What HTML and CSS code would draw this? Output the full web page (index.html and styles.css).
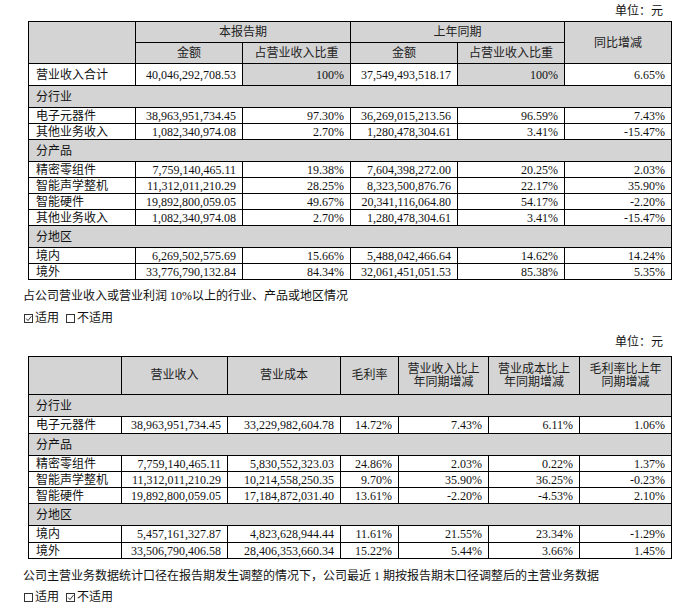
FILE: index.html
```html
<!DOCTYPE html>
<html lang="zh-CN">
<head>
<meta charset="utf-8">
<title>主营业务</title>
<link rel="stylesheet" href="styles.css">
</head>
<body>
<div class="page">
  <div class="unit unit-first">单位：元</div>
  <table class="grid t1">
    <colgroup>
      <col class="w107"><col class="w107"><col class="w108"><col class="w107"><col class="w107"><col class="w107">
    </colgroup>
    <thead>
      <tr class="hr">
        <th rowspan="2" class="g"></th>
        <th colspan="2" class="g">本报告期</th>
        <th colspan="2" class="g">上年同期</th>
        <th rowspan="2" class="g">同比增减</th>
      </tr>
      <tr class="hr">
        <th class="g">金额</th>
        <th class="g">占营业收入比重</th>
        <th class="g">金额</th>
        <th class="g">占营业收入比重</th>
      </tr>
    </thead>
    <tbody>
      <tr class="total">
        <td class="lbl">营业收入合计</td>
        <td class="num">40,046,292,708.53</td>
        <td class="num g">100%</td>
        <td class="num">37,549,493,518.17</td>
        <td class="num g">100%</td>
        <td class="num">6.65%</td>
      </tr>
      <tr class="sec"><td colspan="6" class="g lbl">分行业</td></tr>
      <tr class="row">
        <td class="lbl">电子元器件</td>
        <td class="num">38,963,951,734.45</td>
        <td class="num">97.30%</td>
        <td class="num">36,269,015,213.56</td>
        <td class="num">96.59%</td>
        <td class="num">7.43%</td>
      </tr>
      <tr class="row">
        <td class="lbl">其他业务收入</td>
        <td class="num">1,082,340,974.08</td>
        <td class="num">2.70%</td>
        <td class="num">1,280,478,304.61</td>
        <td class="num">3.41%</td>
        <td class="num">-15.47%</td>
      </tr>
      <tr class="sec"><td colspan="6" class="g lbl">分产品</td></tr>
      <tr class="row">
        <td class="lbl">精密零组件</td>
        <td class="num">7,759,140,465.11</td>
        <td class="num">19.38%</td>
        <td class="num">7,604,398,272.00</td>
        <td class="num">20.25%</td>
        <td class="num">2.03%</td>
      </tr>
      <tr class="row">
        <td class="lbl">智能声学整机</td>
        <td class="num">11,312,011,210.29</td>
        <td class="num">28.25%</td>
        <td class="num">8,323,500,876.76</td>
        <td class="num">22.17%</td>
        <td class="num">35.90%</td>
      </tr>
      <tr class="row">
        <td class="lbl">智能硬件</td>
        <td class="num">19,892,800,059.05</td>
        <td class="num">49.67%</td>
        <td class="num">20,341,116,064.80</td>
        <td class="num">54.17%</td>
        <td class="num">-2.20%</td>
      </tr>
      <tr class="row">
        <td class="lbl">其他业务收入</td>
        <td class="num">1,082,340,974.08</td>
        <td class="num">2.70%</td>
        <td class="num">1,280,478,304.61</td>
        <td class="num">3.41%</td>
        <td class="num">-15.47%</td>
      </tr>
      <tr class="sec"><td colspan="6" class="g lbl">分地区</td></tr>
      <tr class="row">
        <td class="lbl">境内</td>
        <td class="num">6,269,502,575.69</td>
        <td class="num">15.66%</td>
        <td class="num">5,488,042,466.64</td>
        <td class="num">14.62%</td>
        <td class="num">14.24%</td>
      </tr>
      <tr class="row">
        <td class="lbl">境外</td>
        <td class="num">33,776,790,132.84</td>
        <td class="num">84.34%</td>
        <td class="num">32,061,451,051.53</td>
        <td class="num">85.38%</td>
        <td class="num">5.35%</td>
      </tr>
    </tbody>
  </table>

  <p class="note note-1">占公司营业收入或营业利润 10%以上的行业、产品或地区情况</p>
  <p class="opts opts-1"><svg class="box" viewBox="0 0 11 11" width="11" height="11"><rect x="1.5" y="1.5" width="8" height="8" fill="none" stroke="#333" stroke-width="1"/><path d="M3.2 5.6 L5 7.6 L8.4 3.2" fill="none" stroke="#333" stroke-width="1"/></svg>适用<span class="sp"></span><svg class="box" viewBox="0 0 11 11" width="11" height="11"><rect x="1.5" y="1.5" width="8" height="8" fill="none" stroke="#333" stroke-width="1"/></svg>不适用</p>

  <div class="unit unit-second">单位：元</div>
  <table class="grid t2">
    <colgroup>
      <col class="w93"><col class="w106"><col class="w113"><col class="w58"><col class="w90"><col class="w91"><col class="w92">
    </colgroup>
    <thead>
      <tr class="hr2">
        <th class="g"></th>
        <th class="g">营业收入</th>
        <th class="g">营业成本</th>
        <th class="g">毛利率</th>
        <th class="g">营业收入比上<br>年同期增减</th>
        <th class="g">营业成本比上<br>年同期增减</th>
        <th class="g">毛利率比上年<br>同期增减</th>
      </tr>
    </thead>
    <tbody>
      <tr class="sec"><td colspan="7" class="g lbl">分行业</td></tr>
      <tr class="row row17">
        <td class="lbl">电子元器件</td>
        <td class="num">38,963,951,734.45</td>
        <td class="num">33,229,982,604.78</td>
        <td class="num">14.72%</td>
        <td class="num">7.43%</td>
        <td class="num">6.11%</td>
        <td class="num">1.06%</td>
      </tr>
      <tr class="sec"><td colspan="7" class="g lbl">分产品</td></tr>
      <tr class="row">
        <td class="lbl">精密零组件</td>
        <td class="num">7,759,140,465.11</td>
        <td class="num">5,830,552,323.03</td>
        <td class="num">24.86%</td>
        <td class="num">2.03%</td>
        <td class="num">0.22%</td>
        <td class="num">1.37%</td>
      </tr>
      <tr class="row">
        <td class="lbl">智能声学整机</td>
        <td class="num">11,312,011,210.29</td>
        <td class="num">10,214,558,250.35</td>
        <td class="num">9.70%</td>
        <td class="num">35.90%</td>
        <td class="num">36.25%</td>
        <td class="num">-0.23%</td>
      </tr>
      <tr class="row">
        <td class="lbl">智能硬件</td>
        <td class="num">19,892,800,059.05</td>
        <td class="num">17,184,872,031.40</td>
        <td class="num">13.61%</td>
        <td class="num">-2.20%</td>
        <td class="num">-4.53%</td>
        <td class="num">2.10%</td>
      </tr>
      <tr class="sec"><td colspan="7" class="g lbl">分地区</td></tr>
      <tr class="row row17">
        <td class="lbl">境内</td>
        <td class="num">5,457,161,327.87</td>
        <td class="num">4,823,628,944.44</td>
        <td class="num">11.61%</td>
        <td class="num">21.55%</td>
        <td class="num">23.34%</td>
        <td class="num">-1.29%</td>
      </tr>
      <tr class="row">
        <td class="lbl">境外</td>
        <td class="num">33,506,790,406.58</td>
        <td class="num">28,406,353,660.34</td>
        <td class="num">15.22%</td>
        <td class="num">5.44%</td>
        <td class="num">3.66%</td>
        <td class="num">1.45%</td>
      </tr>
    </tbody>
  </table>

  <p class="note note-2">公司主营业务数据统计口径在报告期发生调整的情况下，公司最近 1 期按报告期末口径调整后的主营业务数据</p>
  <p class="opts opts-2"><svg class="box" viewBox="0 0 11 11" width="11" height="11"><rect x="1.5" y="1.5" width="8" height="8" fill="none" stroke="#333" stroke-width="1"/></svg>适用<span class="sp"></span><svg class="box" viewBox="0 0 11 11" width="11" height="11"><rect x="1.5" y="1.5" width="8" height="8" fill="none" stroke="#333" stroke-width="1"/><path d="M3.2 5.6 L5 7.6 L8.4 3.2" fill="none" stroke="#333" stroke-width="1"/></svg>不适用</p>
</div>
</body>
</html>
```

FILE: styles.css
```css
html, body {
  margin: 0;
  padding: 0;
  background: #ffffff;
}

body {
  font-family: "Liberation Serif", "Noto Sans CJK SC", serif;
  font-size: 12px;
  color: #111111;
}

.page {
  width: 648px;
  padding: 2px 0 0 23px;
}

.unit {
  height: 18px;
  line-height: 18px;
  text-align: right;
  padding-right: 8px;
}

.unit-second {
  margin-top: 6px;
}

.grid {
  margin-left: 5px;
  width: 643px;
  table-layout: fixed;
  border-collapse: collapse;
}

.t1 {
  margin-top: 1px;
}

.t2 {
  margin-top: 5px;
}

.w107 { width: 107px; }
.w108 { width: 108px; }
.w93 { width: 93px; }
.w106 { width: 106px; }
.w113 { width: 113px; }
.w58 { width: 58px; }
.w90 { width: 90px; }
.w91 { width: 91px; }
.w92 { width: 92px; }

.grid th,
.grid td {
  border: 1px solid #000000;
  padding: 0 6px;
  line-height: 14px;
  white-space: nowrap;
  overflow: hidden;
  vertical-align: middle;
}

.grid th {
  font-weight: normal;
  text-align: center;
  color: #222222;
}

.g {
  background: #d4d4d4;
}

.grid .lbl {
  text-align: left;
  padding-left: 7px;
}

.grid .num {
  text-align: right;
  padding-right: 6px;
}

.hr th {
  height: 20px;
}

.hr2 th {
  height: 37px;
  line-height: 13px;
  padding: 0 2px;
}

.total td {
  height: 21px;
}

.sec td {
  height: 21px;
}

.row td {
  height: 15px;
}

.row17 td {
  height: 16px;
}

.note {
  margin: 7px 0 0 0;
  height: 18px;
  line-height: 18px;
}

.note-2 {
  margin-top: 8px;
}

.opts {
  margin: 4px 0 0 0;
  height: 18px;
  line-height: 18px;
  display: flex;
  align-items: center;
}

.opts-2 {
  margin-top: 3px;
}

.box {
  display: block;
  margin-right: 1px;
}

.sp {
  display: inline-block;
  width: 6px;
}
```
